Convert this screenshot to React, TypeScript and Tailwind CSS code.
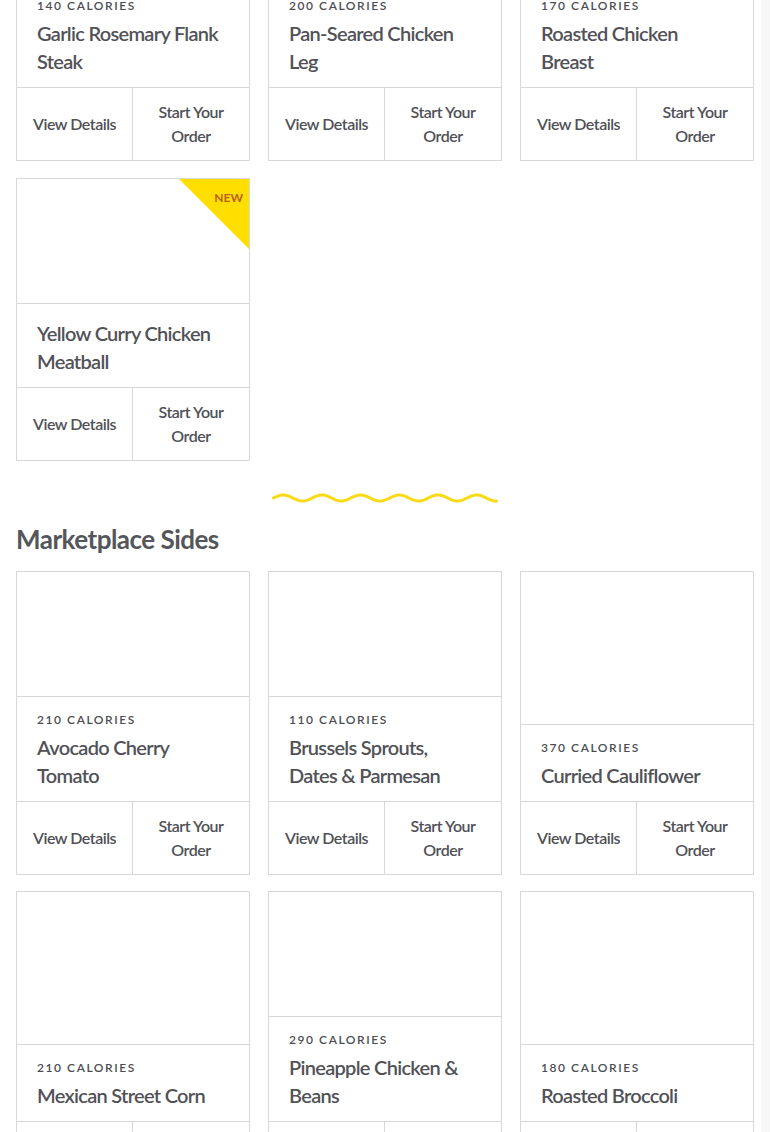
type Item = {
    calories?: number
    title: string
    isNew?: boolean
}

const mains: Item[] = [
    { calories: 140, title: "Garlic Rosemary Flank Steak" },
    { calories: 200, title: "Pan-Seared Chicken Leg" },
    { calories: 170, title: "Roasted Chicken Breast" },
    { title: "Yellow Curry Chicken Meatball", isNew: true },
]

const sides: Item[] = [
    { calories: 210, title: "Avocado Cherry Tomato" },
    { calories: 110, title: "Brussels Sprouts, Dates & Parmesan" },
    { calories: 370, title: "Curried Cauliflower" },
    { calories: 210, title: "Mexican Street Corn" },
    { calories: 290, title: "Pineapple Chicken & Beans" },
    { calories: 180, title: "Roasted Broccoli" },
]

function MenuCard({ item }: { item: Item }) {
    return (
        <div className="flex flex-col border border-[#d8d8da] bg-white">
            <div className="relative flex-1 min-h-[124px]">
                {item.isNew && (
                    <div className="absolute right-0 top-0 w-[70px] h-[70px] bg-[#ffde00] [clip-path:polygon(0_0,100%_0,100%_100%)]">
                        <span className="absolute right-[6px] top-[12px] text-[12px] leading-[14px] font-bold text-[#b8621b]">NEW</span>
                    </div>
                )}
            </div>
            <div className="border-t border-[#d8d8da] pl-5 pr-7 pt-[15px] pb-[12px]">
                {item.calories !== undefined && (
                    <div className="text-[12px] leading-[16px] font-semibold tracking-[0.13em] text-[#4c4d52] mb-[5px]">
                        {item.calories} CALORIES
                    </div>
                )}
                <h3 className="text-[20px] leading-[28px] font-semibold tracking-[-0.035em] text-[#515257]">{item.title}</h3>
            </div>
            <div className="grid grid-cols-2 border-t border-[#d8d8da] h-[73px] text-[16px] leading-[24px] font-semibold tracking-[-0.03em] text-[#505156] text-center">
                <div className="flex items-center justify-center border-r border-[#d8d8da] px-2">View Details</div>
                <div className="flex items-center justify-center px-5">Start Your Order</div>
            </div>
        </div>
    )
}

function Wave() {
    // sine wave, period ~38.7px, amplitude 3px
    const pts: string[] = []
    for (let x = 0; x <= 223; x += 1) {
        const y = 6 - 3 * Math.sin((2 * Math.PI * x) / 38.7)
        pts.push(`${(x + 1.5).toFixed(1)},${y.toFixed(2)}`)
    }
    return (
        <svg width="226" height="12" viewBox="0 0 226 12" className="block mx-auto">
            <polyline points={pts.join(" ")} fill="none" stroke="#f9da17" strokeWidth="3" strokeLinecap="round" strokeLinejoin="round" />
        </svg>
    )
}

export default function App() {
    return (
        <div className="flex min-h-[1132px] overflow-hidden bg-white" style={{ fontFamily: "Lato, 'Open Sans', sans-serif" }}>
            <main className="w-[761px] shrink-0 pl-4 pr-[7px]">
                <div className="grid grid-cols-3 gap-x-[18px] gap-y-[17px] mt-[-143px]">
                    {mains.map((m) => (
                        <MenuCard key={m.title} item={m} />
                    ))}
                </div>

                <div className="mt-[31px]">
                    <Wave />
                </div>

                <h2 className="mt-[19px] mb-[16px] text-[26px] leading-[32px] font-bold tracking-[-0.02em] text-[#54565b]">Marketplace Sides</h2>

                <div className="grid grid-cols-3 gap-x-[18px] gap-y-4 pb-10">
                    {sides.map((s) => (
                        <MenuCard key={s.title} item={s} />
                    ))}
                </div>
            </main>
            <div className="flex-1 bg-[#f7f7f8]" />
        </div>
    )
}
